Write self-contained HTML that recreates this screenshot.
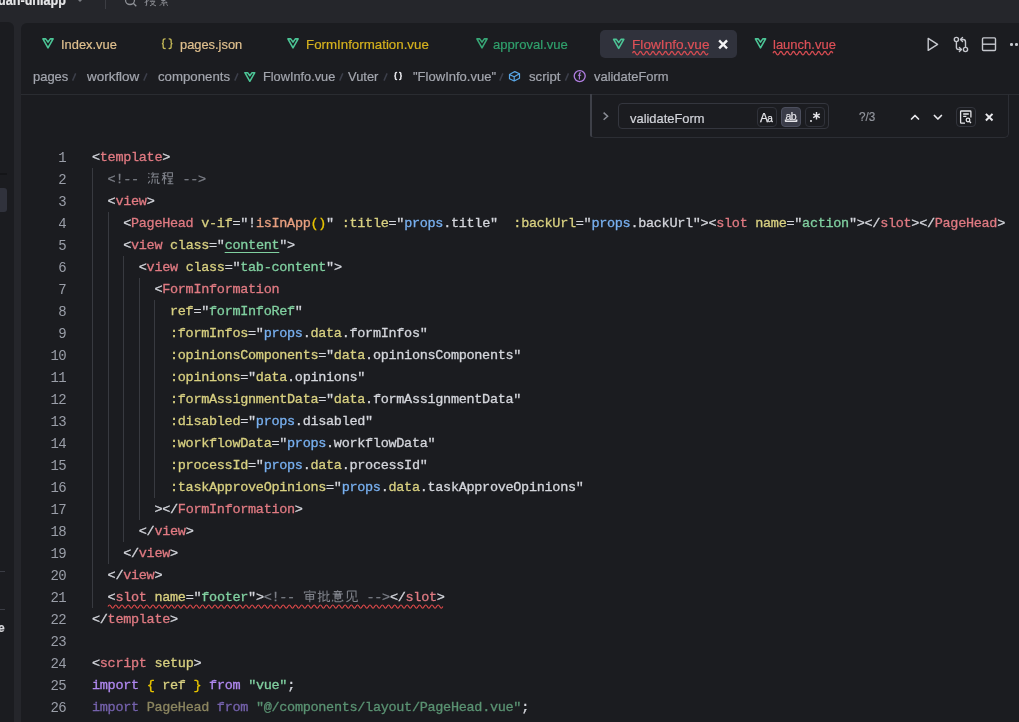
<!DOCTYPE html>
<html><head><meta charset="utf-8">
<style>
*{box-sizing:border-box}
html,body{margin:0;padding:0;width:1019px;height:722px;overflow:hidden;background:#25262b;font-family:"Liberation Sans",sans-serif}
.abs{position:absolute}
svg{position:absolute;overflow:visible}
.tx{position:absolute;line-height:20px;height:20px;white-space:pre;-webkit-text-stroke:0.2px currentColor}
.wavy{}
#leftpanel{left:-10px;top:22px;width:24px;height:700px;background:#1b1c20;border-radius:0 6px 0 0}
#editor{left:21px;top:23px;width:1010px;height:700px;background:#1b1c20;border-radius:6px 0 0 0}
.ln{position:absolute;left:26px;width:40px;text-align:right;font-family:"Liberation Mono",monospace;font-size:14px;letter-spacing:-0.6px;line-height:22px;height:22px;color:#9a9ea8}
.cl{position:absolute;left:92px;font-family:"Liberation Mono",monospace;font-size:13.5px;letter-spacing:-0.3px;line-height:22px;height:22px;white-space:pre;color:#d4d6dc;-webkit-text-stroke:0.3px currentColor}
.cj{display:inline-block;width:14px;text-align:center;font-size:13px;-webkit-text-stroke:0}
.g{position:absolute;width:1px;background:#383a40}
.p{color:#d4d6dc}
.t{color:#e07a82}
.a{color:#d8d080}
.s{color:#80d0a0}
.u{text-decoration:underline;text-decoration-color:#80d0a0;text-underline-offset:3px}
.b{color:#78b0f0}
.y{color:#d8d080}
.gd{color:#e8c400}
.c{color:#7a7d85}
.f{color:#e8a080}
.k{color:#b088f0}
.dk{color:#7562ad}
.da{color:#8c8660}
.ds{color:#5a9272}
.wv{}
#root{position:absolute;left:0;top:0;width:1019px;height:722px;overflow:hidden;will-change:transform}
</style></head><body><div id="root">
<!-- top bar -->
<div class="abs" style="left:77.5px;top:-0.5px;width:0;height:0;border-left:2.6px solid transparent;border-right:2.6px solid transparent;border-top:2.6px solid #7c7e84"></div>
<div class="abs" style="left:105px;top:0;width:1px;height:9px;background:#3c3d43"></div>
<svg style="left:0;top:0" width="1" height="1"><circle cx="130" cy="0" r="4.5" fill="none" stroke="#8e9096" stroke-width="1.3"/><line x1="133.3" y1="3.3" x2="136.3" y2="6.3" stroke="#8e9096" stroke-width="1.3"/></svg>

<div id="leftpanel" class="abs"></div>
<div class="abs" style="left:0;top:172.5px;width:7px;height:2.5px;background:#141518"></div>
<div class="abs" style="left:-4px;top:188px;width:11px;height:24px;background:#30323c;border-radius:3px"></div>
<div class="abs" style="left:0;top:571px;width:5px;height:1px;background:#3a3c44"></div>
<div class="abs" style="left:0;top:609px;width:5px;height:1px;background:#3a3c44"></div>
<div class="tx" style="left:-2px;top:618px;font-size:12px;font-weight:bold;color:#d8d8dc">e</div>

<div id="editor" class="abs"></div>

<!-- active tab bg -->
<div class="abs" style="left:600px;top:30px;width:137px;height:28px;background:#30323c;border-radius:5px"></div>

<!-- close x active tab -->
<svg style="left:0;top:0" width="1" height="1"><path d="M720 41.3 L726.2 47.5 M726.2 41.3 L720 47.5" stroke="#f4f4f6" stroke-width="2.4" stroke-linecap="square"/></svg>
<!-- right toolbar icons -->
<svg style="left:0;top:0" width="1" height="1" fill="none" stroke="#c6c8ce" stroke-width="1.4">
 <path d="M928.2 38.4 L928.2 50.4 L937.6 44.4 Z" stroke-linejoin="round"/>
 <circle cx="956.4" cy="39.5" r="2.1"/><path d="M956.4 41.6 V47.3 Q956.4 49.5 958.6 49.5 H961.2" stroke-linecap="round"/><path d="M959.4 47.5 L961.4 49.5 L959.4 51.5" stroke-linecap="round" stroke-linejoin="round"/>
 <circle cx="965.5" cy="49.5" r="2.1"/><path d="M965.5 47.4 V41.7 Q965.5 39.5 963.3 39.5 H960.7" stroke-linecap="round"/><path d="M962.5 37.5 L960.5 39.5 L962.5 41.5" stroke-linecap="round" stroke-linejoin="round"/>
 <rect x="982.5" y="37.9" width="13" height="12.6" rx="1"/><line x1="982.5" y1="44.2" x2="995.5" y2="44.2"/>
</svg>
<div class="abs" style="left:1010px;top:43px;width:2.5px;height:2.5px;background:#c6c8ce;border-radius:50%"></div>
<div class="abs" style="left:1015px;top:43px;width:2.5px;height:2.5px;background:#c6c8ce;border-radius:50%"></div>

<!-- breadcrumb icons -->
<svg style="left:0;top:0" width="1" height="1" fill="none" stroke="#5aa8e8" stroke-width="1.2" stroke-linejoin="round">
 <path d="M509.5 74.6 L514.8 71.6 L519.5 73.8 L519.5 78.2 L514.2 81 L509.5 78.8 Z"/><path d="M509.5 74.6 L514.2 76.8 L519.5 73.8 M514.2 76.8 V81"/>
</svg>
<svg style="left:0;top:0" width="1" height="1"><circle cx="579.7" cy="76.1" r="5.5" fill="none" stroke="#b07ee0" stroke-width="1.3"/><path d="M580.9 72.9 Q579.4 72.5 579.4 74 V79.6 M577.9 75.3 H581.2" fill="none" stroke="#b07ee0" stroke-width="1.1"/></svg>

<!-- breadcrumb bottom line -->
<div class="abs" style="left:21px;top:94px;width:1000px;height:1px;background:#2a2c31"></div>

<!-- find widget -->
<div class="abs" style="left:589.5px;top:94px;width:419px;height:43.5px;border:1px solid #2c2e34;border-top:none;border-radius:0 0 5px 5px"></div>
<div class="abs" style="left:589.5px;top:94px;width:2.5px;height:43px;background:#3e4048;border-radius:0 0 0 3px"></div>
<svg style="left:0;top:0" width="1" height="1" fill="none" stroke="#8a8d95" stroke-width="1.5"><path d="M603.6 112.6 L607.6 116.2 L603.6 119.8"/></svg>
<div class="abs" style="left:618.3px;top:103.3px;width:210.5px;height:26.2px;border:1px solid #34363e;border-radius:4px"></div>
<div class="abs" style="left:757.4px;top:107.3px;width:19.4px;height:19.4px;border:1px solid #30323a;border-radius:4px"></div>
<div class="abs" style="left:781px;top:107.3px;width:20px;height:19.4px;border:1px solid #4c4f5e;background:#3a3c48;border-radius:4px"></div>
<div class="abs" style="left:805px;top:107.3px;width:19.7px;height:19.4px;border:1px solid #30323a;border-radius:4px"></div>
<div class="tx" style="left:760px;top:107.8px;font-size:12px;color:#e6e6ea;letter-spacing:-0.8px;-webkit-text-stroke:0.25px #e6e6ea">A<span style="font-size:10px">a</span></div>
<div class="tx" style="left:785.4px;top:105.6px;font-size:10.5px;color:#e6e6ea;letter-spacing:-0.4px;-webkit-text-stroke:0.2px #e6e6ea">ab</div>
<svg style="left:0;top:0" width="1" height="1" fill="none" stroke="#e6e6ea" stroke-width="1.2"><path d="M785.6 119.6 V121.3 H796.6 V119.6" stroke-width="1.6" stroke-linejoin="round"/></svg>
<div class="abs" style="left:810.1px;top:119.9px;width:2.2px;height:2.2px;background:#e6e6ea;border-radius:50%"></div>
<svg style="left:0;top:0" width="1" height="1" stroke="#e6e6ea" stroke-width="1.4"><path d="M816.5 112 V119.6 M813.2 113.9 L819.8 117.7 M819.8 113.9 L813.2 117.7"/></svg>
<svg style="left:0;top:0" width="1" height="1" fill="none" stroke="#e8e8ec" stroke-width="1.7" stroke-linecap="round" stroke-linejoin="round"><path d="M911.5 119 L915 115.5 L918.5 119"/><path d="M934.4 115.5 L937.9 119 L941.4 115.5"/></svg><svg style="left:0;top:0" width="1" height="1" fill="none" stroke="#e8e8ec" stroke-width="2" stroke-linecap="square"><path d="M986.6 114.6 L991.8 119.8 M991.8 114.6 L986.6 119.8"/></svg>
<div class="abs" style="left:956.2px;top:107px;width:19.6px;height:19.6px;border:1px solid #33353d;border-radius:4px"></div>
<svg style="left:0;top:0" width="1" height="1" fill="none" stroke="#e6e6ea" stroke-width="1.3"><path d="M970.9 117.4 V111.7 Q970.9 111 970.2 111 H961.3 Q960.6 111 960.6 111.7 V122.5 Q960.6 123.2 961.3 123.2 H965"/><path d="M963.2 114 H968.8 M963.2 116.4 H966.4" stroke-width="1.4"/><circle cx="968" cy="120" r="1.8"/><path d="M969.3 121.3 L971 123"/></svg>

<div class="tx" style="left:-1.60px;top:-9.70px;font-size:15px;color:#e6e6e8;font-weight:bold;transform:scaleX(0.8413);transform-origin:0 0;">uan-uniapp</div>
<div class="tx" style="left:60.60px;top:34.62px;font-size:13.5px;color:#e0c08e;font-weight:normal;transform:scaleX(0.9531);transform-origin:0 0;">Index.vue</div>
<div class="tx" style="left:180.40px;top:34.62px;font-size:13.5px;color:#e0c08e;font-weight:normal;transform:scaleX(0.9523);transform-origin:0 0;">pages.json</div>
<div class="tx" style="left:306.40px;top:34.62px;font-size:13.5px;color:#d6b21e;font-weight:normal;transform:scaleX(0.9860);transform-origin:0 0;">FormInformation.vue</div>
<div class="tx" style="left:493.40px;top:34.62px;font-size:13.5px;color:#30a06c;font-weight:normal;transform:scaleX(0.9688);transform-origin:0 0;">approval.vue</div>
<div class="tx wavy" style="left:631.90px;top:34.62px;font-size:13.5px;color:#dd5057;font-weight:normal;transform:scaleX(1.0125);transform-origin:0 0;">FlowInfo.vue</div>
<div class="tx wavy" style="left:772.60px;top:34.62px;font-size:13.5px;color:#dd5057;font-weight:normal;transform:scaleX(0.9631);transform-origin:0 0;">launch.vue</div>
<div class="tx" style="left:33.40px;top:66.50px;font-size:13px;color:#a3a6ae;font-weight:normal;transform:scaleX(0.9966);transform-origin:0 0;">pages</div>
<div class="tx" style="left:87.00px;top:66.50px;font-size:13px;color:#a3a6ae;font-weight:normal;transform:scaleX(1.0340);transform-origin:0 0;">workflow</div>
<div class="tx" style="left:157.90px;top:66.50px;font-size:13px;color:#a3a6ae;font-weight:normal;transform:scaleX(1.0180);transform-origin:0 0;">components</div>
<div class="tx" style="left:263.00px;top:66.50px;font-size:13px;color:#a3a6ae;font-weight:normal;transform:scaleX(0.9810);transform-origin:0 0;">FlowInfo.vue</div>
<div class="tx" style="left:348.00px;top:66.50px;font-size:13px;color:#a3a6ae;font-weight:normal;transform:scaleX(0.9937);transform-origin:0 0;">Vuter</div>
<div class="tx" style="left:412.60px;top:66.50px;font-size:13px;color:#a3a6ae;font-weight:normal;transform:scaleX(1.0020);transform-origin:0 0;">&quot;FlowInfo.vue&quot;</div>
<div class="tx" style="left:529.20px;top:66.50px;font-size:13px;color:#a3a6ae;font-weight:normal;transform:scaleX(1.0141);transform-origin:0 0;">script</div>
<div class="tx" style="left:594.40px;top:66.50px;font-size:13px;color:#a3a6ae;font-weight:normal;transform:scaleX(0.9928);transform-origin:0 0;">validateForm</div>
<div class="tx" style="left:630.40px;top:108.60px;font-size:13px;color:#d2d4da;font-weight:normal;transform:scaleX(0.9928);transform-origin:0 0;">validateForm</div>
<div class="tx" style="left:859.40px;top:106.90px;font-size:13px;color:#92959d;font-weight:normal;transform:scaleX(0.9016);transform-origin:0 0;">?/3</div>

<div class="ln" style="top:146.5px">1</div>
<div class="cl" style="top:146.5px"><span class="p">&lt;</span><span class="t">template</span><span class="p">&gt;</span></div>
<div class="ln" style="top:168.5px">2</div>
<div class="cl" style="top:168.5px"><span class="p">  </span><span class="c">&lt;!-- <span class="cj"> </span><span class="cj"> </span> --&gt;</span></div>
<div class="ln" style="top:190.5px">3</div>
<div class="cl" style="top:190.5px"><span class="p">  &lt;</span><span class="t">view</span><span class="p">&gt;</span></div>
<div class="ln" style="top:212.5px">4</div>
<div class="cl" style="top:212.5px"><span class="p">    &lt;</span><span class="t">PageHead</span><span class="p"> </span><span class="a">v-if</span><span class="p">=&quot;!</span><span class="f">isInApp</span><span class="gd">()</span><span class="p">&quot; </span><span class="a">:title</span><span class="p">=&quot;</span><span class="b">props</span><span class="p">.title&quot;  </span><span class="a">:backUrl</span><span class="p">=&quot;</span><span class="b">props</span><span class="p">.backUrl&quot;&gt;&lt;</span><span class="t">slot</span><span class="p"> </span><span class="a">name</span><span class="p">=&quot;</span><span class="s">action</span><span class="p">&quot;&gt;&lt;/</span><span class="t">slot</span><span class="p">&gt;&lt;/</span><span class="t">PageHead</span><span class="p">&gt;</span></div>
<div class="ln" style="top:234.5px">5</div>
<div class="cl" style="top:234.5px"><span class="p">    &lt;</span><span class="t">view</span><span class="p"> </span><span class="a">class</span><span class="p">=&quot;</span><span class="s u">content</span><span class="p">&quot;&gt;</span></div>
<div class="ln" style="top:256.5px">6</div>
<div class="cl" style="top:256.5px"><span class="p">      &lt;</span><span class="t">view</span><span class="p"> </span><span class="a">class</span><span class="p">=&quot;</span><span class="s">tab-content</span><span class="p">&quot;&gt;</span></div>
<div class="ln" style="top:278.5px">7</div>
<div class="cl" style="top:278.5px"><span class="p">        &lt;</span><span class="t">FormInformation</span></div>
<div class="ln" style="top:300.5px">8</div>
<div class="cl" style="top:300.5px"><span class="a">          ref</span><span class="p">=&quot;</span><span class="s">formInfoRef</span><span class="p">&quot;</span></div>
<div class="ln" style="top:322.5px">9</div>
<div class="cl" style="top:322.5px"><span class="a">          :formInfos</span><span class="p">=&quot;</span><span class="b">props</span><span class="p">.</span><span class="y">data</span><span class="p">.formInfos&quot;</span></div>
<div class="ln" style="top:344.5px">10</div>
<div class="cl" style="top:344.5px"><span class="a">          :opinionsComponents</span><span class="p">=&quot;</span><span class="y">data</span><span class="p">.opinionsComponents&quot;</span></div>
<div class="ln" style="top:366.5px">11</div>
<div class="cl" style="top:366.5px"><span class="a">          :opinions</span><span class="p">=&quot;</span><span class="y">data</span><span class="p">.opinions&quot;</span></div>
<div class="ln" style="top:388.5px">12</div>
<div class="cl" style="top:388.5px"><span class="a">          :formAssignmentData</span><span class="p">=&quot;</span><span class="y">data</span><span class="p">.formAssignmentData&quot;</span></div>
<div class="ln" style="top:410.5px">13</div>
<div class="cl" style="top:410.5px"><span class="a">          :disabled</span><span class="p">=&quot;</span><span class="b">props</span><span class="p">.disabled&quot;</span></div>
<div class="ln" style="top:432.5px">14</div>
<div class="cl" style="top:432.5px"><span class="a">          :workflowData</span><span class="p">=&quot;</span><span class="b">props</span><span class="p">.workflowData&quot;</span></div>
<div class="ln" style="top:454.5px">15</div>
<div class="cl" style="top:454.5px"><span class="a">          :processId</span><span class="p">=&quot;</span><span class="b">props</span><span class="p">.</span><span class="y">data</span><span class="p">.processId&quot;</span></div>
<div class="ln" style="top:476.5px">16</div>
<div class="cl" style="top:476.5px"><span class="a">          :taskApproveOpinions</span><span class="p">=&quot;</span><span class="b">props</span><span class="p">.</span><span class="y">data</span><span class="p">.taskApproveOpinions&quot;</span></div>
<div class="ln" style="top:498.5px">17</div>
<div class="cl" style="top:498.5px"><span class="p">        &gt;&lt;/</span><span class="t">FormInformation</span><span class="p">&gt;</span></div>
<div class="ln" style="top:520.5px">18</div>
<div class="cl" style="top:520.5px"><span class="p">      &lt;/</span><span class="t">view</span><span class="p">&gt;</span></div>
<div class="ln" style="top:542.5px">19</div>
<div class="cl" style="top:542.5px"><span class="p">    &lt;/</span><span class="t">view</span><span class="p">&gt;</span></div>
<div class="ln" style="top:564.5px">20</div>
<div class="cl" style="top:564.5px"><span class="p">  &lt;/</span><span class="t">view</span><span class="p">&gt;</span></div>
<div class="ln" style="top:586.5px">21</div>
<div class="cl" style="top:586.5px"><span class="p">  </span><span class="wv"><span class="p">&lt;</span><span class="t">slot</span><span class="p"> </span><span class="a">name</span><span class="p">=&quot;</span><span class="s">footer</span><span class="p">&quot;&gt;</span><span class="c">&lt;!-- <span class="cj"> </span><span class="cj"> </span><span class="cj"> </span><span class="cj"> </span> --&gt;</span><span class="p">&lt;/</span><span class="t">slot</span><span class="p">&gt;</span></span></div>
<div class="ln" style="top:608.5px">22</div>
<div class="cl" style="top:608.5px"><span class="p">&lt;/</span><span class="t">template</span><span class="p">&gt;</span></div>
<div class="ln" style="top:630.5px">23</div>
<div class="cl" style="top:630.5px"></div>
<div class="ln" style="top:652.5px">24</div>
<div class="cl" style="top:652.5px"><span class="p">&lt;</span><span class="t">script</span><span class="p"> </span><span class="a">setup</span><span class="p">&gt;</span></div>
<div class="ln" style="top:674.5px">25</div>
<div class="cl" style="top:674.5px"><span class="k">import</span><span class="p"> </span><span class="gd">{</span><span class="p"> </span><span class="a">ref</span><span class="p"> </span><span class="gd">}</span><span class="p"> </span><span class="k">from</span><span class="p"> </span><span class="s">&quot;vue&quot;</span><span class="p">;</span></div>
<div class="ln" style="top:696.5px">26</div>
<div class="cl" style="top:696.5px"><span class="dk">import</span><span class="p"> </span><span class="da">PageHead</span><span class="p"> </span><span class="dk">from</span><span class="p"> </span><span class="ds">&quot;@/components/layout/PageHead.vue&quot;</span><span class="p">;</span></div>
<svg style="left:0;top:0" width="1" height="1"><path d="M108.00 606.60 q1.550 -3.200 3.100 0 q1.550 3.200 3.100 0 q1.550 -3.200 3.100 0 q1.550 3.200 3.100 0 q1.550 -3.200 3.100 0 q1.550 3.200 3.100 0 q1.550 -3.200 3.100 0 q1.550 3.200 3.100 0 q1.550 -3.200 3.100 0 q1.550 3.200 3.100 0 q1.550 -3.200 3.100 0 q1.550 3.200 3.100 0 q1.550 -3.200 3.100 0 q1.550 3.200 3.100 0 q1.550 -3.200 3.100 0 q1.550 3.200 3.100 0 q1.550 -3.200 3.100 0 q1.550 3.200 3.100 0 q1.550 -3.200 3.100 0 q1.550 3.200 3.100 0 q1.550 -3.200 3.100 0 q1.550 3.200 3.100 0 q1.550 -3.200 3.100 0 q1.550 3.200 3.100 0 q1.550 -3.200 3.100 0 q1.550 3.200 3.100 0 q1.550 -3.200 3.100 0 q1.550 3.200 3.100 0 q1.550 -3.200 3.100 0 q1.550 3.200 3.100 0 q1.550 -3.200 3.100 0 q1.550 3.200 3.100 0 q1.550 -3.200 3.100 0 q1.550 3.200 3.100 0 q1.550 -3.200 3.100 0 q1.550 3.200 3.100 0 q1.550 -3.200 3.100 0 q1.550 3.200 3.100 0 q1.550 -3.200 3.100 0 q1.550 3.200 3.100 0 q1.550 -3.200 3.100 0 q1.550 3.200 3.100 0 q1.550 -3.200 3.100 0 q1.550 3.200 3.100 0 q1.550 -3.200 3.100 0 q1.550 3.200 3.100 0 q1.550 -3.200 3.100 0 q1.550 3.200 3.100 0 q1.550 -3.200 3.100 0 q1.550 3.200 3.100 0 q1.550 -3.200 3.100 0 q1.550 3.200 3.100 0 q1.550 -3.200 3.100 0 q1.550 3.200 3.100 0 q1.550 -3.200 3.100 0 q1.550 3.200 3.100 0 q1.550 -3.200 3.100 0 q1.550 3.200 3.100 0 q1.550 -3.200 3.100 0 q1.550 3.200 3.100 0 q1.550 -3.200 3.100 0 q1.550 3.200 3.100 0 q1.550 -3.200 3.100 0 q1.550 3.200 3.100 0 q1.550 -3.200 3.100 0 q1.550 3.200 3.100 0 q1.550 -3.200 3.100 0 q1.550 3.200 3.100 0 q1.550 -3.200 3.100 0 q1.550 3.200 3.100 0 q1.550 -3.200 3.100 0 q1.550 3.200 3.100 0 q1.550 -3.200 3.100 0 q1.550 3.200 3.100 0 q1.550 -3.200 3.100 0 q1.550 3.200 3.100 0 q1.550 -3.200 3.100 0 q1.550 3.200 3.100 0 q1.550 -3.200 3.100 0 q1.550 3.200 3.100 0 q1.550 -3.200 3.100 0 q1.550 3.200 3.100 0 q1.550 -3.200 3.100 0 q1.550 3.200 3.100 0 q1.550 -3.200 3.100 0 q1.550 3.200 3.100 0 q1.550 -3.200 3.100 0 q1.550 3.200 3.100 0 q1.550 -3.200 3.100 0 q1.550 3.200 3.100 0 q1.550 -3.200 3.100 0 q1.550 3.200 3.100 0 q1.550 -3.200 3.100 0 q1.550 3.200 3.100 0 q1.550 -3.200 3.100 0 q1.550 3.200 3.100 0 q1.550 -3.200 3.100 0 q1.550 3.200 3.100 0 q1.550 -3.200 3.100 0 q1.550 3.200 3.100 0 q1.550 -3.200 3.100 0 q1.550 3.200 3.100 0 q1.550 -3.200 3.100 0 q1.550 3.200 3.100 0 q1.550 -3.200 3.100 0 q1.550 3.200 3.100 0 q1.550 -3.200 3.100 0 q1.550 3.200 3.100 0" fill="none" stroke="#e04a4a" stroke-width="1.1"/></svg>
<svg style="left:0;top:0" width="1" height="1"><path d="M632.50 53.20 q1.575 -3.400 3.150 0 q1.575 3.400 3.150 0 q1.575 -3.400 3.150 0 q1.575 3.400 3.150 0 q1.575 -3.400 3.150 0 q1.575 3.400 3.150 0 q1.575 -3.400 3.150 0 q1.575 3.400 3.150 0 q1.575 -3.400 3.150 0 q1.575 3.400 3.150 0 q1.575 -3.400 3.150 0 q1.575 3.400 3.150 0 q1.575 -3.400 3.150 0 q1.575 3.400 3.150 0 q1.575 -3.400 3.150 0 q1.575 3.400 3.150 0 q1.575 -3.400 3.150 0 q1.575 3.400 3.150 0 q1.575 -3.400 3.150 0 q1.575 3.400 3.150 0 q1.575 -3.400 3.150 0 q1.575 3.400 3.150 0 q1.575 -3.400 3.150 0 q1.575 3.400 3.150 0" fill="none" stroke="#d44c52" stroke-width="1.3"/></svg>
<svg style="left:0;top:0" width="1" height="1"><path d="M773.00 53.20 q1.575 -3.400 3.150 0 q1.575 3.400 3.150 0 q1.575 -3.400 3.150 0 q1.575 3.400 3.150 0 q1.575 -3.400 3.150 0 q1.575 3.400 3.150 0 q1.575 -3.400 3.150 0 q1.575 3.400 3.150 0 q1.575 -3.400 3.150 0 q1.575 3.400 3.150 0 q1.575 -3.400 3.150 0 q1.575 3.400 3.150 0 q1.575 -3.400 3.150 0 q1.575 3.400 3.150 0 q1.575 -3.400 3.150 0 q1.575 3.400 3.150 0 q1.575 -3.400 3.150 0 q1.575 3.400 3.150 0 q1.575 -3.400 3.150 0" fill="none" stroke="#d44c52" stroke-width="1.3"/></svg>
<svg style="left:0;top:0" width="1" height="1"><path d="M42.90 38.90 L45.70 38.90 L48.00 42.10 L50.30 38.90 L53.10 38.90 L48.00 47.80 Z" fill="none" stroke="#4cc596" stroke-width="1.60" stroke-linejoin="round"/></svg>
<svg style="left:0;top:0" width="1" height="1"><path d="M287.90 38.90 L290.70 38.90 L293.00 42.10 L295.30 38.90 L298.10 38.90 L293.00 47.80 Z" fill="none" stroke="#4cc596" stroke-width="1.60" stroke-linejoin="round"/></svg>
<svg style="left:0;top:0" width="1" height="1"><path d="M476.90 38.90 L479.70 38.90 L482.00 42.10 L484.30 38.90 L487.10 38.90 L482.00 47.80 Z" fill="none" stroke="#38a676" stroke-width="1.60" stroke-linejoin="round"/></svg>
<svg style="left:0;top:0" width="1" height="1"><path d="M613.60 39.40 L616.40 39.40 L618.70 42.60 L621.00 39.40 L623.80 39.40 L618.70 48.30 Z" fill="none" stroke="#4cc596" stroke-width="1.60" stroke-linejoin="round"/></svg>
<svg style="left:0;top:0" width="1" height="1"><path d="M755.40 38.90 L758.20 38.90 L760.50 42.10 L762.80 38.90 L765.60 38.90 L760.50 47.80 Z" fill="none" stroke="#4cc596" stroke-width="1.60" stroke-linejoin="round"/></svg>
<svg style="left:0;top:0" width="1" height="1"><path d="M244.87 72.67 L247.59 72.67 L249.82 75.78 L252.05 72.67 L254.77 72.67 L249.82 81.31 Z" fill="none" stroke="#4cc596" stroke-width="1.55" stroke-linejoin="round"/></svg>
<svg style="left:0;top:0" width="1" height="1"><path d="M72.60 80.60 L75.70 73.40" stroke="#3c3f4a" stroke-width="1.5"/></svg>
<svg style="left:0;top:0" width="1" height="1"><path d="M143.80 80.60 L146.90 73.40" stroke="#3c3f4a" stroke-width="1.5"/></svg>
<svg style="left:0;top:0" width="1" height="1"><path d="M234.80 80.60 L237.90 73.40" stroke="#3c3f4a" stroke-width="1.5"/></svg>
<svg style="left:0;top:0" width="1" height="1"><path d="M339.70 80.60 L342.80 73.40" stroke="#3c3f4a" stroke-width="1.5"/></svg>
<svg style="left:0;top:0" width="1" height="1"><path d="M384.00 80.60 L387.10 73.40" stroke="#3c3f4a" stroke-width="1.5"/></svg>
<svg style="left:0;top:0" width="1" height="1"><path d="M499.80 80.60 L502.90 73.40" stroke="#3c3f4a" stroke-width="1.5"/></svg>
<svg style="left:0;top:0" width="1" height="1"><path d="M565.40 80.60 L568.50 73.40" stroke="#3c3f4a" stroke-width="1.5"/></svg>
<svg style="left:0;top:0" width="1" height="1" fill="none" stroke="#c8bc58" stroke-width="1.3" stroke-linecap="round"><path d="M165.15 38.80 Q163.17 38.80 163.17 40.40 V42.45 Q163.17 43.65 161.85 43.65 Q163.17 43.65 163.17 44.85 V46.90 Q163.17 48.50 165.15 48.50"/><path d="M169.15 38.80 Q171.13 38.80 171.13 40.40 V42.45 Q171.13 43.65 172.45 43.65 Q171.13 43.65 171.13 44.85 V46.90 Q171.13 48.50 169.15 48.50"/></svg>
<svg style="left:0;top:0" width="1" height="1" fill="none" stroke="#e4e4e8" stroke-width="1.5" stroke-linecap="round"><path d="M396.50 72.60 Q395.40 72.60 395.40 73.60 V75.10 Q395.40 76.00 394.30 76.00 Q395.40 76.00 395.40 76.90 V78.40 Q395.40 79.40 396.50 79.40"/><path d="M399.70 72.60 Q400.80 72.60 400.80 73.60 V75.10 Q400.80 76.00 401.90 76.00 Q400.80 76.00 400.80 76.90 V78.40 Q400.80 79.40 399.70 79.40"/></svg>
<svg style="left:0;top:0" width="1" height="1"><path transform="translate(147.80 172.20) scale(1.000)" d="M0.6 1 L1.6 2 M0.4 4.6 L1.5 5.6 M0.4 11.2 L2.2 8.6 M4.8 0 L5.4 1 M3 1.9 H11.2 M6.2 2.2 L4.2 4.8 H10.2 M9 3.6 L10.6 5.2 M4.6 6.6 Q4.6 10 3.6 11.6 M7.2 6.6 V11.2 M9.6 6.6 V10.8 Q9.6 11.4 10.4 11.4 H11.2 V10" fill="none" stroke="#80838b" stroke-width="1.05" stroke-linecap="butt"/></svg>
<svg style="left:0;top:0" width="1" height="1"><path transform="translate(161.80 172.20) scale(1.000)" d="M0.8 1.4 L4.6 0.4 M0.2 3.6 H5 M2.6 1 V12 M2.4 4 L0.2 8.2 M2.8 5 L4.6 7.2 M6 0.6 H10.6 V4.6 H6 Z M6 6.6 H10.8 M6.4 9 H10.6 M5.6 11.6 H11.6 M8.3 6.6 V11.6" fill="none" stroke="#80838b" stroke-width="1.05" stroke-linecap="butt"/></svg>
<svg style="left:0;top:0" width="1" height="1"><path transform="translate(303.80 590.20) scale(1.000)" d="M5.6 0 L6.2 1 M0.6 3.2 V1.8 H11.4 V3.2 M2.2 4.2 H9.8 V9 H2.2 Z M2.2 6.6 H9.8 M6 3.4 V12" fill="none" stroke="#80838b" stroke-width="1.05" stroke-linecap="butt"/></svg>
<svg style="left:0;top:0" width="1" height="1"><path transform="translate(317.80 590.20) scale(1.000)" d="M0 3.2 H4 M2 0.4 V11.2 Q2 11.8 1 11.4 M0 8.4 L4 6.4 M5.2 0.6 V11 L8.2 9.6 M5.2 5.2 L7.8 4.2 M9.2 0.4 V10.4 Q9.2 11.2 10.2 11.2 H11.6 V9.6 M9.2 5.4 L11.6 3.8" fill="none" stroke="#80838b" stroke-width="1.05" stroke-linecap="butt"/></svg>
<svg style="left:0;top:0" width="1" height="1"><path transform="translate(331.80 590.20) scale(1.000)" d="M5.6 0 L6.2 0.8 M2 1.4 H10 M4 2.2 L4.6 3.4 M8.2 2.2 L7.6 3.4 M0.8 3.8 H11.2 M3.2 4.9 H8.8 V8.1 H3.2 Z M3.2 6.5 H8.8 M1.2 9.6 L0.4 11.2 M3.2 9.2 V11 Q3.2 11.6 4 11.6 H8.6 Q9.4 11.6 9.6 10.4 M5.6 9 L6.6 10 M10.2 9.6 L11.4 11.2" fill="none" stroke="#80838b" stroke-width="1.05" stroke-linecap="butt"/></svg>
<svg style="left:0;top:0" width="1" height="1"><path transform="translate(345.80 590.20) scale(1.000)" d="M1.6 0.8 V8.4 M1.6 0.8 H10.2 V7.2 M5.8 2.4 V6 Q5.6 9.6 0.6 11.6 M7.2 5.6 V10.6 Q7.2 11.2 8 11.2 H11.4 V9.4" fill="none" stroke="#80838b" stroke-width="1.05" stroke-linecap="butt"/></svg>
<svg style="left:0;top:0" width="1" height="1"><path transform="translate(144.60 -5.90) scale(1.000)" d="M0 3.2 H4 M2 0.4 V11.2 Q2 11.8 1 11.4 M0 8.4 L4 6.4 M5 1 V5.6 H10.6 V1 H5 M5 3.3 H10.6 M7.8 0 V6.2 M5.2 7.2 H10.2 Q8.8 10.4 5.4 11.8 M6.6 8.6 Q8.6 11 11.4 11.8" fill="none" stroke="#8a8c92" stroke-width="1.00" stroke-linecap="butt"/></svg>
<svg style="left:0;top:0" width="1" height="1"><path transform="translate(157.80 -5.90) scale(1.000)" d="M1 1.3 H11 M6 0 V3.2 M1 4.8 V3.6 H11 V4.8 M6 4.2 L3.6 6.2 L7.6 6.6 M7.4 5.2 L3.8 9 L9.2 8.6 M8.2 7.4 L9.4 9 M6 9 V12 M3.6 10 L2 11.6 M8.6 10 L10.2 11.6" fill="none" stroke="#8a8c92" stroke-width="1.00" stroke-linecap="butt"/></svg>
<div class="g" style="left:92px;top:168px;height:440px"></div>
<div class="g" style="left:108px;top:212px;height:352px"></div>
<div class="g" style="left:123px;top:256px;height:286px"></div>
<div class="g" style="left:139px;top:278px;height:242px"></div>
<div class="g" style="left:154px;top:300px;height:198px"></div>

</div></body></html>
